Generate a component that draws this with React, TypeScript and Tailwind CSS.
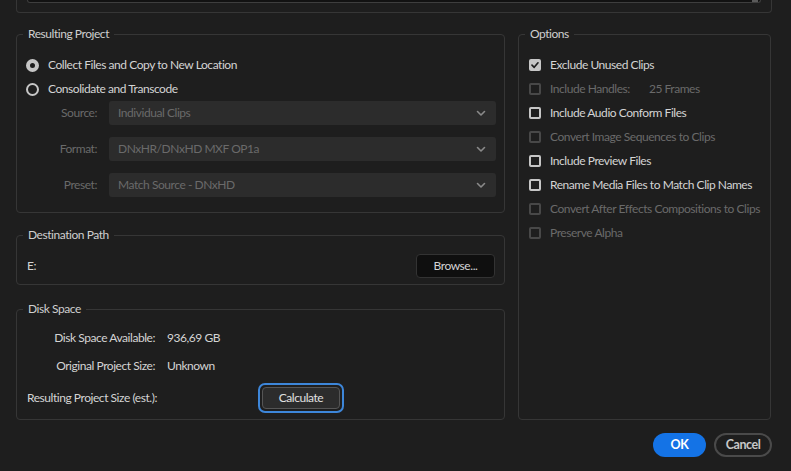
import React from "react";

const font = { fontFamily: "Lato, 'Liberation Sans', sans-serif" };

function Chevron() {
  return (
    <svg width="12" height="12" viewBox="0 0 12 12" className="text-[#8a8a8a]">
      <path d="M2.5 4.5 6 8l3.5-3.5" fill="none" stroke="currentColor" strokeWidth="1.6" strokeLinecap="round" strokeLinejoin="round" />
    </svg>
  );
}

function Radio({ checked, label }: { checked?: boolean; label: string }) {
  return (
    <div className="flex h-6 items-center gap-[9px] pl-[9px]">
      <span
        className={`h-[13px] w-[13px] rounded-full border-[#c6c6c6] bg-[#1e1e1e] ${checked ? "border-[4px]" : "border-2"}`}
      />
      <span className="text-[#d4d4d4]">{label}</span>
    </div>
  );
}

function Check({ checked, disabled, label, extra }: { checked?: boolean; disabled?: boolean; label: string; extra?: string }) {
  return (
    <div className="flex h-6 items-center gap-[9px] whitespace-nowrap pl-[10px]">
      {checked ? (
        <span className="flex h-3 w-3 items-center justify-center rounded-[2px] bg-[#c6c6c6]">
          <svg width="10" height="10" viewBox="0 0 10 10">
            <path d="M2 5.2 4.2 7.3 8 2.8" fill="none" stroke="#1e1e1e" strokeWidth="1.7" strokeLinecap="round" strokeLinejoin="round" />
          </svg>
        </span>
      ) : (
        <span className={`h-3 w-3 rounded-[2px] border-2 ${disabled ? "border-[#484848]" : "border-[#c6c6c6]"}`} />
      )}
      <span className={disabled ? "text-[#6a6a6a]" : "text-[#d4d4d4]"}>{label}</span>
      {extra && <span className="ml-[10px] text-[#6a6a6a]">{extra}</span>}
    </div>
  );
}

function SelectRow({ label, value }: { label: string; value: string }) {
  return (
    <div className="flex items-center">
      <span className="w-[80px] text-right text-[#6a6a6a]">{label}</span>
      <div className="ml-3 flex h-6 flex-1 items-center justify-between rounded-[3px] bg-[#2c2c2c] pl-[9px] pr-[9px]">
        <span className="text-[#6a6a6a]">{value}</span>
        <Chevron />
      </div>
    </div>
  );
}

function Group({ title, className, children }: { title: string; className?: string; children: React.ReactNode }) {
  return (
    <fieldset className={`rounded-[4px] border border-[#363636] ${className ?? ""}`}>
      <legend className="ml-[6px] px-[5px] text-[12px] leading-4 text-[#cfcfcf]">{title}</legend>
      {children}
    </fieldset>
  );
}

export default function App() {
  return (
    <div className="h-[471px] w-[791px] overflow-hidden bg-[#1e1e1e] text-[12px] leading-4 tracking-[-0.45px]" style={font}>
      {/* clipped panel above */}
      <div className="ml-4 mr-[19px] h-[13px] rounded-b-[4px] border-x border-b border-[#363636] px-[10px]">
        <div className="relative h-[3px] rounded-b-[3px] border-x border-b border-[#3e3e3e] bg-[#121212]">
          <div className="absolute right-[2px] top-0 h-[2px] w-[6px] bg-[#5a5a5a]" />
        </div>
      </div>

      <div className="mt-[13px] flex gap-[13px] pl-4 pr-5">
        <div className="flex w-[489px] flex-col">
          <Group title="Resulting Project" className="pb-[15px] pr-[8px]">
            <div className="pt-[11px]">
              <Radio checked label="Collect Files and Copy to New Location" />
              <Radio label="Consolidate and Transcode" />
            </div>
            <div className="flex flex-col gap-3">
              <SelectRow label="Source:" value="Individual Clips" />
              <SelectRow label="Format:" value="DNxHR/DNxHD MXF OP1a" />
              <SelectRow label="Preset:" value="Match Source - DNxHD" />
            </div>
          </Group>

          <Group title="Destination Path" className="mt-[14px]">
            <div className="flex items-center justify-between pb-[6px] pl-[10px] pr-[9px] pt-[11px]">
              <span className="text-[#d4d4d4]">E:</span>
              <button className="h-6 w-[79px] rounded-[4px] border border-[#333] bg-[#0f0f0f] text-[#d4d4d4]">Browse...</button>
            </div>
          </Group>

          <Group title="Disk Space" className="mt-[16px]">
            <div className="pb-[5px] pl-[10px] pt-[7px]">
              <div className="flex h-[28px] items-center">
                <span className="w-[128px] text-right text-[#d4d4d4]">Disk Space Available:</span>
                <span className="ml-3 text-[#d4d4d4]">936,69 GB</span>
              </div>
              <div className="flex h-[28px] items-center">
                <span className="w-[128px] text-right text-[#d4d4d4]">Original Project Size:</span>
                <span className="ml-3 text-[#d4d4d4]">Unknown</span>
              </div>
              <div className="mt-[2px] flex h-[32px] items-center">
                <span className="w-[231px] text-[#d4d4d4]">Resulting Project Size (est.):</span>
                <div className="rounded-[7px] border-2 border-[#3d86d9] p-[2px]">
                  <button className="h-[22px] w-[78px] rounded-[4px] border border-[#555] bg-[#2c2c2c] text-[#e0e0e0]">Calculate</button>
                </div>
              </div>
            </div>
          </Group>
        </div>

        <Group title="Options" className="flex-1">
          <div className="pt-[11px]">
            <Check checked label="Exclude Unused Clips" />
            <Check disabled label="Include Handles:" extra="25 Frames" />
            <Check label="Include Audio Conform Files" />
            <Check disabled label="Convert Image Sequences to Clips" />
            <Check label="Include Preview Files" />
            <Check label="Rename Media Files to Match Clip Names" />
            <Check disabled label="Convert After Effects Compositions to Clips" />
            <Check disabled label="Preserve Alpha" />
          </div>
        </Group>
      </div>

      <div className="mt-[13px] flex justify-end gap-2 pr-[19px]">
        <button className="h-6 w-[53px] rounded-full bg-[#1473e6] text-[12.5px] font-bold text-white">OK</button>
        <button className="h-6 w-[58px] rounded-full border-2 border-[#4a4a4a] text-[12.5px] font-bold text-[#c8c8c8]">Cancel</button>
      </div>
    </div>
  );
}
